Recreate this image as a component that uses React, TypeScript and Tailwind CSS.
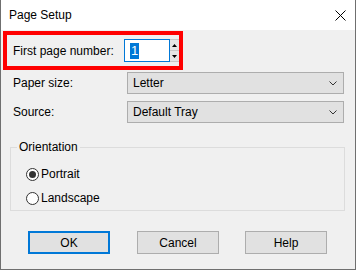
import React from 'react';

const Chevron = () => (
  <svg width="8" height="5" viewBox="0 0 8 5" className="shrink-0">
    <polyline points="0.5,0.5 4,4 7.5,0.5" fill="none" stroke="#333" strokeWidth="1" />
  </svg>
);

function Select({ value }: { value: string }) {
  return (
    <div className="w-[217px] h-[22px] flex items-center justify-between bg-[#e1e1e1] border border-[#adadad] pl-[5px] pr-[6px]">
      <span>{value}</span>
      <Chevron />
    </div>
  );
}

function Radio({ label, checked }: { label: string; checked?: boolean }) {
  return (
    <div className="h-[24px] flex items-center">
      <div className="w-[13px] h-[13px] rounded-full border border-[#333] bg-white flex items-center justify-center">
        {checked && <div className="w-[7px] h-[7px] rounded-full bg-[#333]" />}
      </div>
      <span className="ml-[2px]">{label}</span>
    </div>
  );
}

export default function App() {
  return (
    <div className="w-[356px] h-[270px] flex flex-col bg-[#f0f0f0] border-x border-b border-[#6f6f6f] text-[12px] text-black overflow-hidden font-['Liberation_Sans',sans-serif] leading-[14px]">
      {/* Title bar */}
      <div className="h-[30px] shrink-0 bg-white flex items-center justify-between pl-[8px] pr-[9px]">
        <span>Page Setup</span>
        <svg width="11" height="11" viewBox="0 0 11 11">
          <path d="M0.5 0.5L10.5 10.5M10.5 0.5L0.5 10.5" stroke="#000" strokeWidth="1" />
        </svg>
      </div>

      <div className="flex flex-col">
        {/* First page number, highlighted */}
        <div className="ml-[2px] mt-[1px] w-[180px] h-[39px] border-4 border-[#ff0000] flex items-center pl-[6px]">
          <span className="w-[111px]">First page number:</span>
          <div className="w-[46px] h-[23px] border border-[#0078d7] bg-white flex items-center pl-[5px]">
            <span className="bg-[#0078d7] text-white text-[13px] leading-[16px] px-[1px]">1</span>
          </div>
          <div className="w-[9px] h-[23px] flex flex-col bg-[#e6e6e6] border-y border-[#c8c8c8]">
            <div className="flex-1 flex items-center justify-center border-b border-[#c8c8c8]">
              <svg width="5" height="3" viewBox="0 0 5 3"><polygon points="2.5,0 5,3 0,3" fill="#000" /></svg>
            </div>
            <div className="flex-1 flex items-center justify-center">
              <svg width="5" height="3" viewBox="0 0 5 3"><polygon points="0,0 5,0 2.5,3" fill="#000" /></svg>
            </div>
          </div>
        </div>

        {/* Paper size */}
        <div className="mt-[2px] flex items-center pl-[12px]">
          <span className="w-[114px]">Paper size:</span>
          <Select value="Letter" />
        </div>

        {/* Source */}
        <div className="mt-[7px] flex items-center pl-[12px]">
          <span className="w-[114px]">Source:</span>
          <Select value="Default Tray" />
        </div>

        {/* Orientation */}
        <fieldset className="mt-[17px] ml-[9px] w-[335px] h-[71px] border border-[#dcdcdc]">
          <legend className="ml-[6px] px-[2px]">Orientation</legend>
          <div className="flex flex-col pt-[8px] pl-[15px]">
            <Radio label="Portrait" checked />
            <Radio label="Landscape" />
          </div>
        </fieldset>

        {/* Buttons */}
        <div className="mt-[20px] flex pl-[27px]">
          <button className="w-[82px] h-[23px] bg-[#e1e1e1] border-2 border-[#0078d7]">OK</button>
          <button className="ml-[27px] w-[82px] h-[23px] bg-[#e1e1e1] border border-[#adadad]">Cancel</button>
          <button className="ml-[26px] w-[82px] h-[23px] bg-[#e1e1e1] border border-[#adadad]">Help</button>
        </div>
      </div>
    </div>
  );
}
